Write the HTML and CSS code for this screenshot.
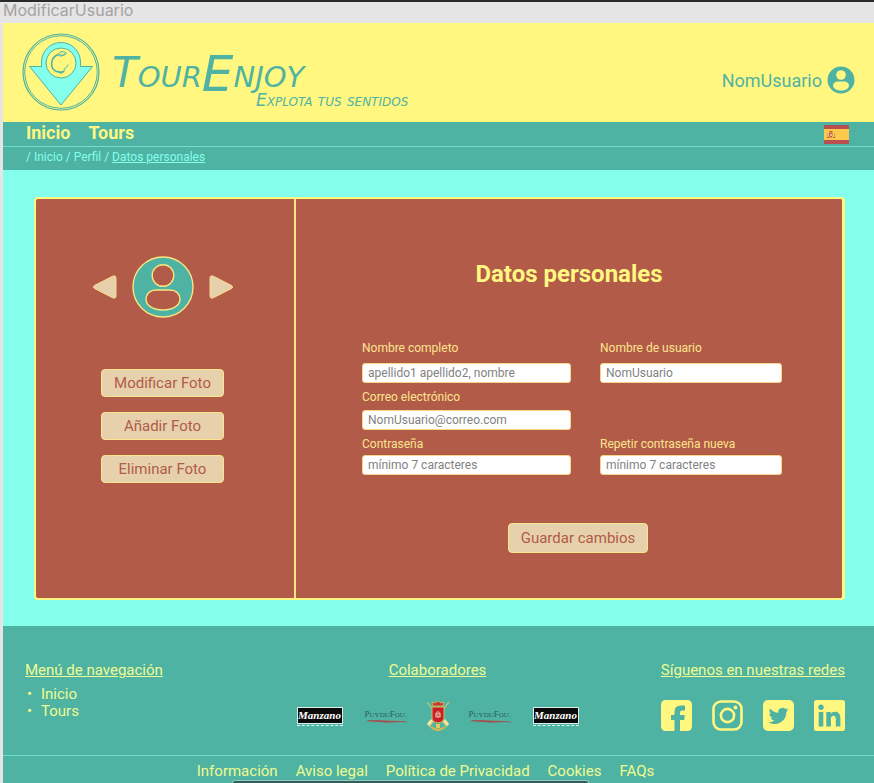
FILE: index.html
```html
<!DOCTYPE html>
<html lang="es">
<head>
<meta charset="utf-8">
<meta name="viewport" content="width=device-width, initial-scale=1">
<title>TourEnjoy - Datos personales</title>
<link rel="stylesheet" href="styles.css">
</head>
<body>
<p class="frame-name">ModificarUsuario</p>

<div class="page">
  <header class="header">
    <a class="brand" href="#">
      <svg class="brand-mark" viewBox="0 0 78 78" aria-hidden="true">
        <g fill="none" stroke="#4fb3a3">
          <circle cx="39" cy="39" r="38" stroke-width="1.200"/>
          <circle cx="39" cy="39" r="36.300" stroke-width="1"/>
        </g>
        <path d="M7.500 33.500H19.500V29a19.500 19.500 0 0 1 39 0v4.500H70.500L39 72z" fill="#84ffec" stroke="#4fb3a3"/>
        <circle cx="39" cy="30" r="15" fill="#fff780" stroke="#4fb3a3"/>
        <g fill="none" stroke="#4fb3a3" stroke-linecap="round">
          <path d="M35 22c-6 3-7 11-3 15 1 1 3 2 5 2" stroke-width="1.500"/>
          <path d="M36 21c2-3 6-3 8-1M36 21c3 2 6 1 8-1M35 22c2 1 5 2 9-1"/>
          <path d="M36 38c2 2 4 2 7-1M42 36c2-1 3-2 4-4"/>
          <path d="M37 39.500a3 2.500 0 0 0 5-1z" fill="#4fb3a3"/>
        </g>
      </svg>
      <span class="brand-text">
        <span class="brand-name">Tour<span class="brand-big">E</span>njoy</span>
        <span class="brand-tagline">Explota tus sentidos</span>
      </span>
    </a>
    <a class="user" href="#">
      NomUsuario
      <svg class="user-icon" viewBox="0 0 28 28" aria-hidden="true">
        <circle cx="14" cy="14" r="13.500" fill="#4fb3a3"/>
        <circle cx="14" cy="9" r="4.800" fill="#fff780"/>
        <path d="M11 15.500h6c3 0 5 2 5 4 0 3-4 5-8 5s-8-2-8-5c0-2 2-4 5-4z" fill="#fff780"/>
      </svg>
    </a>
  </header>

  <nav class="nav">
    <a href="#">Inicio</a>
    <a href="#">Tours</a>
    <button class="language" type="button" aria-label="Español">
      <svg viewBox="0 0 25 19" aria-hidden="true">
        <path d="M0 0h25v19H0z" fill="#b94f50"/>
        <path d="M0 4h25v11H0z" fill="#fbc94c"/>
        <path d="M5 7.500h3.500v3.500a1.700 1.700 0 0 1-3.500 0z" fill="#cc5a42"/>
        <path d="M3.500 8v5M10.500 8v5" stroke="#cf9a80"/>
        <path d="M5.500 6.500h3M3 12.500h2M9 12.500h2" stroke="#c4523f"/>
        <path d="M6 9h2v2H6z" fill="#e3b9a8"/>
      </svg>
    </button>
  </nav>
  <nav class="breadcrumb" aria-label="Ruta">
    / <a href="#">Inicio</a> / <a href="#">Perfil</a> / <a class="current" href="#">Datos personales</a>
  </nav>

  <main class="main">
    <div class="panel">
      <section class="photo">
        <div class="carousel">
          <button class="arrow" type="button" aria-label="Foto anterior">
            <svg viewBox="0 0 25 26" aria-hidden="true"><path d="M2.500 11.500 20.500 2.300q3.500-1.500 3.500 2V21.700q0 3.500-3.500 2L2.500 14.500q-2.500-1.500 0-3z" fill="#e7d1ac" stroke="#fbdc8c"/></svg>
          </button>
          <svg class="avatar" viewBox="0 0 62 62" aria-hidden="true">
            <g stroke="#f7e583" stroke-width="1.400">
              <circle cx="31" cy="31" r="30" fill="#4fb3a3"/>
              <circle cx="31" cy="19.500" r="10.800" fill="#b15b48"/>
              <path d="M24 34h14c6 0 10 4 10 9 0 7-8 11-17 11s-17-4-17-11c0-5 4-9 10-9z" fill="#b15b48"/>
            </g>
          </svg>
          <button class="arrow" type="button" aria-label="Foto siguiente">
            <svg viewBox="0 0 25 26" aria-hidden="true"><path d="M22.500 11.500 4.500 2.300Q1 .8 1 4.300V21.700q0 3.500 3.500 2L22.500 14.500q2.500-1.500 0-3z" fill="#e7d1ac" stroke="#fbdc8c"/></svg>
          </button>
        </div>
        <div class="photo-actions">
          <button class="button" type="button">Modificar Foto</button>
          <button class="button" type="button">Añadir Foto</button>
          <button class="button" type="button">Eliminar Foto</button>
        </div>
      </section>

      <section class="details">
        <h1>Datos personales</h1>
        <form class="form">
          <div class="fields">
            <div class="field">
              <label for="name">Nombre completo</label>
              <input id="name" type="text" placeholder="apellido1 apellido2, nombre">
            </div>
            <div class="field">
              <label for="user">Nombre de usuario</label>
              <input id="user" type="text" placeholder="NomUsuario">
            </div>
            <div class="field field-mail">
              <label for="mail">Correo electrónico</label>
              <input id="mail" type="email" placeholder="NomUsuario@correo.com">
            </div>
            <div class="field field-tight">
              <label for="pass">Contraseña</label>
              <input id="pass" type="password" placeholder="mínimo 7 caracteres">
            </div>
            <div class="field field-tight">
              <label for="repeat">Repetir contraseña nueva</label>
              <input id="repeat" type="password" placeholder="mínimo 7 caracteres">
            </div>
          </div>
          <div class="form-actions">
            <button class="button button-save" type="submit">Guardar cambios</button>
          </div>
        </form>
      </section>
    </div>
  </main>

  <footer class="footer">
    <div class="footer-columns">
      <section class="footer-menu">
        <h2>Menú de navegación</h2>
        <ul>
          <li><a href="#">Inicio</a></li>
          <li><a href="#">Tours</a></li>
        </ul>
      </section>
      <section class="partners">
        <h2>Colaboradores</h2>
        <div class="partner-logos">
          <div class="manzano"><span>Manzano</span></div>
          <div class="puydufou">
            <span><b>P</b>uydu<b>F</b>ou.</span>
            <svg viewBox="0 0 40 3" aria-hidden="true"><path d="M0 .6c10-.8 16 .5 24 .4 5-.1 9 .2 16 1-7 .2-11-.1-16 .3-6 .4-9-.5-14-.6-5 0-7 .1-10-1.100z" fill="#a5504d" stroke="#a5504d" stroke-width=".4"/></svg>
          </div>
          <svg class="crest" viewBox="0 0 26 32" role="img" aria-label="Escudo">
            <path d="M2 2 22 27M24 2 4 27" stroke="#d8c66f" stroke-width="1.200"/>
            <path d="M7 20 3 25M19 20l4 5" stroke="#f3e89a" stroke-width="3"/>
            <path d="M7 7h12v11q0 4-6 5-6-1-6-5z" fill="#c8202b" stroke="#d5bc55"/>
            <path d="M8 6 7 2l3 1 3-2 3 2 3-1-1 4z" fill="#c53a35" stroke="#dfc456" stroke-width=".7"/>
            <path d="M10 17q1-2 0-3l1.500-2 1.500-1 1.500 1 1.500 2q-1 1 0 3-3 1.500-6 0z" fill="#e9a58c"/>
            <path d="M11.500 15h3M12.500 12.500h1" stroke="#b8322e"/>
            <path d="M6 27q7 6 14 0" fill="none" stroke="#d6b84c" stroke-width="2.200"/>
            <path d="M11 24h4v4h-4z" fill="#dfca60"/>
          </svg>
          <div class="puydufou">
            <span><b>P</b>uydu<b>F</b>ou.</span>
            <svg viewBox="0 0 40 3" aria-hidden="true"><path d="M0 .6c10-.8 16 .5 24 .4 5-.1 9 .2 16 1-7 .2-11-.1-16 .3-6 .4-9-.5-14-.6-5 0-7 .1-10-1.100z" fill="#a5504d" stroke="#a5504d" stroke-width=".4"/></svg>
          </div>
          <div class="manzano"><span>Manzano</span></div>
        </div>
      </section>
      <section class="social">
        <h2>Síguenos en nuestras redes</h2>
        <div class="social-links">
          <a href="#" aria-label="Facebook"><svg viewBox="0 0 31 31"><path d="M5 0h21q5 0 5 5v21q0 5-5 5h-7V20h4.200l.5-5H19v-2.500q0-2 2-2h3V5.500h-4q-6.500 0-6.500 6V15H10v5h3.500v11H5q-5 0-5-5V5q0-5 5-5z" fill="#fff780"/></svg></a>
          <a href="#" aria-label="Instagram"><svg viewBox="0 0 31 31"><g fill="none" stroke="#fff780"><rect x="1.500" y="1.500" width="28" height="28" rx="7.500" stroke-width="2.600"/><circle cx="15.500" cy="15.500" r="6.600" stroke-width="2.600"/></g><circle cx="23.500" cy="7.500" r="1.900" fill="#fff780"/></svg></a>
          <a href="#" aria-label="Twitter"><svg viewBox="0 0 31 31"><rect width="31" height="31" rx="5" fill="#fff780"/><path d="M25.500 9.700c-.7.300-1.500.5-2.300.6.800-.5 1.500-1.300 1.800-2.200-.8.500-1.700.8-2.600 1a4.100 4.100 0 0 0-7 3.700c-3.400-.2-6.400-1.800-8.400-4.300-1 1.900-.6 4.200 1.200 5.500-.7 0-1.300-.2-1.900-.5 0 2 1.400 3.700 3.300 4.100-.6.200-1.200.2-1.900.1.500 1.600 2 2.800 3.900 2.800a8.300 8.300 0 0 1-6.100 1.700c1.800 1.200 4 1.800 6.300 1.800 7.600 0 11.900-6.400 11.600-12.200.8-.6 1.500-1.300 2.100-2.100z" fill="#4fb3a3"/></svg></a>
          <a href="#" aria-label="LinkedIn"><svg viewBox="0 0 31 31"><rect width="31" height="31" rx="2.500" fill="#fff780"/><g fill="#4fb3a3"><circle cx="7" cy="7.300" r="2.700"/><path d="M4.700 12h4.600v14.400H4.700zM12.300 12h4.400v2c2-3.500 9.700-3.600 9.700 4v8.400h-4.600v-7.600c0-4.300-4.900-4-4.900 0v7.600h-4.600z"/></g></svg></a>
        </div>
      </section>
    </div>
    <nav class="legal" aria-label="Legal">
      <a href="#">Información</a>
      <a href="#">Aviso legal</a>
      <a href="#">Política de Privacidad</a>
      <a href="#">Cookies</a>
      <a href="#">FAQs</a>
    </nav>
  </footer>
</div>
<div class="dock"></div>
</body>
</html>
```
FILE: styles.css
```css
:root {
  --yellow: #fff780;
  --teal: #4fb3a3;
  --aqua: #84ffec;
  --brick: #b15b48;
  --sand: #e7d1ac;
  --pale: #effb90;
}

* { box-sizing: border-box; }

body {
  margin: 0;
  border-top: 2px solid #2a2a2a;
  background: #e5e5e5;
  color: var(--yellow);
  font-family: Roboto, "Liberation Sans", sans-serif;
  font-size: 15px;
}

a { color: inherit; text-decoration: none; }
h1, h2, p, ul { margin: 0; padding: 0; }
svg { display: block; }
button { font: inherit; cursor: pointer; }

.frame-name {
  height: 21px;
  padding-left: 3px;
  color: #a3a3a3;
  font: 16px/16px Inter, sans-serif;
}

.page {
  min-height: calc(100vh - 23px);
  margin-left: 3px;
  background: var(--aqua);
}

.header {
  display: flex;
  justify-content: space-between;
  height: 99px;
  padding: 10px 19px 0;
  background: var(--yellow);
  color: var(--teal);
}

.brand { display: flex; gap: 12px; }
.brand-mark { width: 78px; height: 78px; }
.brand-text {
  display: flex;
  flex-direction: column;
  padding-top: 18px;
  font-family: "DejaVu Sans", sans-serif;
  font-style: italic;
}
.brand-name { height: 42px; font-size: 42px; line-height: 44px; font-variant: small-caps; }
.brand-big { font-size: 50px; line-height: 30px; vertical-align: -4px; }
.brand-tagline {
  padding-left: 144px;
  font-size: 17px;
  line-height: 14px;
  font-variant: small-caps;
}

.user { display: flex; align-items: center; gap: 5px; height: 94px; font-size: 18px; }
.user-icon { width: 28px; height: 28px; }

.nav {
  display: flex;
  align-items: center;
  gap: 18px;
  height: 25px;
  padding: 0 25px 4px 23px;
  background: var(--teal);
  border-bottom: 1px solid #75dcca;
  font-size: 18px;
  font-weight: 700;
}
.language {
  width: 25px;
  height: 19px;
  margin: 4px 0 0 auto;
  padding: 0;
  border: 0;
  background: none;
}

.breadcrumb {
  height: 23px;
  padding-left: 23px;
  background: var(--teal);
  color: var(--aqua);
  font-size: 12px;
  line-height: 20px;
}
.current { text-decoration: underline; }

.main { padding: 27px 29px 26px 31px; }

.panel {
  display: grid;
  grid-template-columns: 260px 1fr;
  min-height: 403px;
  border: 2px solid var(--yellow);
  border-right-width: 3px;
  border-radius: 4px;
  background: var(--brick);
}

.photo { padding-top: 57px; border-right: 2px solid #f7e583; }
.carousel { display: flex; justify-content: center; align-items: center; gap: 15px; padding-right: 5px; }
.arrow { width: 25px; height: 26px; padding: 0; border: 0; background: none; }
.avatar { width: 62px; height: 62px; }

.photo-actions {
  display: flex;
  flex-direction: column;
  align-items: center;
  gap: 15px;
  padding: 51px 5px 0 0;
}
.button {
  width: 123px;
  height: 28px;
  padding: 0;
  border: 1px solid #fde58c;
  border-radius: 4px;
  background: var(--sand);
  color: var(--brick);
  font-size: 15px;
}
.button-save { width: 140px; height: 30px; }

.details { padding-top: 60px; }
.details h1 { font-size: 24px; line-height: 30px; text-align: center; }
.form { padding: 50px 60px 0 66px; }
.fields { display: grid; grid-template-columns: 209fr 182fr; column-gap: 29px; }
.field { display: flex; flex-direction: column; gap: 6px; color: #fde58c; }
.field label { font-size: 12px; line-height: 18px; }
.field input {
  width: 100%;
  height: 20px;
  padding: 0 5px;
  border: 1px solid #f5d58a;
  border-radius: 3px;
  background: #fff;
  color: #828282;
  font: 12px Roboto, "Liberation Sans", sans-serif;
}
.field input::placeholder { color: #828282; opacity: 1; }
.field-mail { grid-column: 1 / -1; width: 209px; padding-top: 5px; gap: 4px; }
.field-tight { padding-top: 5px; gap: 2px; }
.form-actions { display: flex; justify-content: center; padding: 48px 0 0 12px; }

.footer { background: var(--teal); color: var(--pale); }
.footer-columns {
  display: grid;
  grid-template-columns: 1fr auto 1fr;
  height: 130px;
  padding: 34px 29px 0 22px;
  border-bottom: 1px solid #75dcca;
}
.footer h2 { font-size: 15px; font-weight: 400; line-height: 20px; text-decoration: underline; }
.footer-menu ul { padding: 6px 0 0 16px; list-style: none; line-height: 17px; }
.footer-menu li::before { content: "•"; float: left; margin-left: -14px; }

.partners { display: flex; flex-direction: column; align-items: center; padding-left: 5px; }
.partner-logos { display: flex; align-items: center; gap: 22px; padding-top: 20px; }
.manzano { width: 46px; height: 19px; border-bottom: 1px dashed #d6f5ee; }
.manzano span {
  display: block;
  height: 17px;
  border: 1px solid #d9f0ea;
  background: #0b0b0b;
  color: #fff;
  font: italic 700 11px/14px "Liberation Serif", serif;
  text-align: center;
}
.puydufou {
  width: 42px;
  color: #2f5d5a;
  font: 7px/10px "Liberation Serif", serif;
  text-transform: uppercase;
  white-space: nowrap;
}
.puydufou span { display: block; }
.puydufou b { font-size: 9px; font-weight: 400; }
.puydufou svg { width: 40px; height: 3px; margin-left: 2px; }
.crest { width: 26px; height: 32px; margin: 0 -4px; }

.social { justify-self: end; }
.social-links { display: flex; justify-content: space-between; padding-top: 20px; }
.social-links svg { width: 31px; height: 31px; }

.legal { display: flex; justify-content: center; gap: 18px; height: 27px; padding-right: 26px; line-height: 30px; }

.dock {
  position: fixed;
  left: 232px;
  right: 285px;
  bottom: 0;
  height: 3px;
  border: 1px solid #8fc9bf;
  border-bottom: 0;
  border-radius: 4px 4px 0 0;
  background: #2f5f58;
}
```
